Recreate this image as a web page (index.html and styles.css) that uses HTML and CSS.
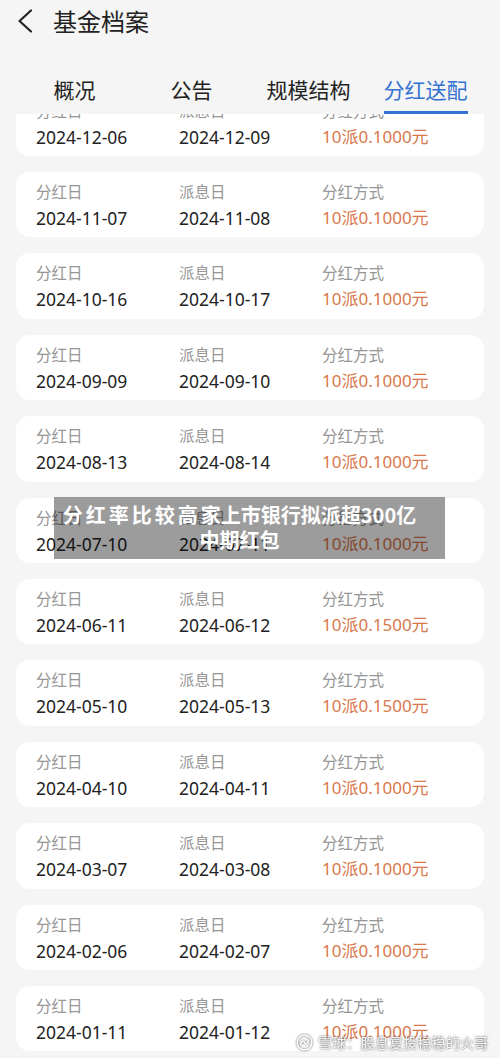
FILE: index.html
```html
<!DOCTYPE html>
<html lang="zh-CN">
<head>
<meta charset="utf-8">
<title>基金档案</title>
<link rel="stylesheet" href="styles.css">
</head>
<body>
<div class="page">
  <header class="header">
    <div class="titlebar">
      <svg class="back" width="20" height="26" viewBox="0 0 20 26"><path d="M15 2.5 L3.5 13 L15 23.5" fill="none" stroke="#222" stroke-width="2.2" stroke-linecap="round" stroke-linejoin="round"/></svg>
      <div class="title">基金档案</div>
    </div>
    <nav class="tabs">
      <div class="tab"><span class="tab-text">概况</span></div>
      <div class="tab"><span class="tab-text">公告</span></div>
      <div class="tab"><span class="tab-text">规模结构</span></div>
      <div class="tab active"><span class="tab-text">分红送配</span></div>
    </nav>
  </header>
  <main class="viewport">
    <div class="list">
      <div class="card"><div class="col"><div class="lbl">分红日</div><div class="val">2024-12-06</div></div><div class="col"><div class="lbl">派息日</div><div class="val">2024-12-09</div></div><div class="col"><div class="lbl">分红方式</div><div class="val orange">10派0.1000元</div></div></div>
      <div class="card"><div class="col"><div class="lbl">分红日</div><div class="val">2024-11-07</div></div><div class="col"><div class="lbl">派息日</div><div class="val">2024-11-08</div></div><div class="col"><div class="lbl">分红方式</div><div class="val orange">10派0.1000元</div></div></div>
      <div class="card"><div class="col"><div class="lbl">分红日</div><div class="val">2024-10-16</div></div><div class="col"><div class="lbl">派息日</div><div class="val">2024-10-17</div></div><div class="col"><div class="lbl">分红方式</div><div class="val orange">10派0.1000元</div></div></div>
      <div class="card"><div class="col"><div class="lbl">分红日</div><div class="val">2024-09-09</div></div><div class="col"><div class="lbl">派息日</div><div class="val">2024-09-10</div></div><div class="col"><div class="lbl">分红方式</div><div class="val orange">10派0.1000元</div></div></div>
      <div class="card"><div class="col"><div class="lbl">分红日</div><div class="val">2024-08-13</div></div><div class="col"><div class="lbl">派息日</div><div class="val">2024-08-14</div></div><div class="col"><div class="lbl">分红方式</div><div class="val orange">10派0.1000元</div></div></div>
      <div class="card"><div class="col"><div class="lbl">分红日</div><div class="val">2024-07-10</div></div><div class="col"><div class="lbl">派息日</div><div class="val">2024-07-11</div></div><div class="col"><div class="lbl">分红方式</div><div class="val orange">10派0.1000元</div></div></div>
      <div class="card"><div class="col"><div class="lbl">分红日</div><div class="val">2024-06-11</div></div><div class="col"><div class="lbl">派息日</div><div class="val">2024-06-12</div></div><div class="col"><div class="lbl">分红方式</div><div class="val orange">10派0.1500元</div></div></div>
      <div class="card"><div class="col"><div class="lbl">分红日</div><div class="val">2024-05-10</div></div><div class="col"><div class="lbl">派息日</div><div class="val">2024-05-13</div></div><div class="col"><div class="lbl">分红方式</div><div class="val orange">10派0.1500元</div></div></div>
      <div class="card"><div class="col"><div class="lbl">分红日</div><div class="val">2024-04-10</div></div><div class="col"><div class="lbl">派息日</div><div class="val">2024-04-11</div></div><div class="col"><div class="lbl">分红方式</div><div class="val orange">10派0.1000元</div></div></div>
      <div class="card"><div class="col"><div class="lbl">分红日</div><div class="val">2024-03-07</div></div><div class="col"><div class="lbl">派息日</div><div class="val">2024-03-08</div></div><div class="col"><div class="lbl">分红方式</div><div class="val orange">10派0.1000元</div></div></div>
      <div class="card"><div class="col"><div class="lbl">分红日</div><div class="val">2024-02-06</div></div><div class="col"><div class="lbl">派息日</div><div class="val">2024-02-07</div></div><div class="col"><div class="lbl">分红方式</div><div class="val orange">10派0.1000元</div></div></div>
      <div class="card"><div class="col"><div class="lbl">分红日</div><div class="val">2024-01-11</div></div><div class="col"><div class="lbl">派息日</div><div class="val">2024-01-12</div></div><div class="col"><div class="lbl">分红方式</div><div class="val orange">10派0.1000元</div></div></div>
    </div>
  </main>
  <div class="caption">
    <div class="cap-line"><span class="cap-pre">分红率比较高</span>家上市银行拟派超300亿</div>
    <div class="cap-line">中期红包</div>
  </div>
  <div class="watermark">
    <svg class="wm-logo" width="17" height="17" viewBox="0 0 17 17"><circle cx="8.5" cy="8.5" r="7.3" fill="none" stroke="#fff" stroke-width="1.4"/><path d="M4.5 10.5 C6 6.5 8 6.5 8.5 8.5 C9 10.5 11 10.5 12.5 6.5" fill="none" stroke="#fff" stroke-width="1.4" stroke-linecap="round"/></svg>
    <span class="wm-text">雪球：股息复投稳稳的火哥</span>
  </div>
</div>
</body>
</html>
```
FILE: styles.css
```css
* { box-sizing: border-box; }
html, body { margin: 0; padding: 0; }
body {
  background: #f5f5f5;
  font-family: "Noto Sans CJK SC", "Noto Sans", sans-serif;
  color: #222;
}
.page {
  position: relative;
  width: 500px;
  height: 1058px;
  overflow: hidden;
  display: flex;
  flex-direction: column;
}
.header {
  flex: 0 0 114px;
  background: #f5f5f5;
}
.titlebar {
  height: 42px;
  display: flex;
  align-items: center;
  padding-left: 16px;
}
.back { flex: 0 0 auto; }
.title {
  margin-left: 17px;
  font-size: 24px;
  line-height: 30px;
  color: #222;
}
.tabs {
  height: 72px;
  display: flex;
  padding: 0 16px;
}
.tab {
  flex: 1;
  display: flex;
  justify-content: center;
  padding-top: 33px;
}
.tab-text {
  font-size: 21px;
  line-height: 28px;
  height: 39px;
  color: #222;
  border-bottom: 3px solid transparent;
}
.tab.active .tab-text {
  color: #3473d1;
  border-bottom-color: #3473d1;
}
.viewport {
  flex: 1;
  overflow: hidden;
}
.list {
  margin-top: -23.3px;
  padding: 0 16px;
  display: flex;
  flex-direction: column;
  gap: 16px;
}
.card {
  height: 65.4px;
  background: #fff;
  border-radius: 14px;
  padding: 9px 0 0 20px;
  display: grid;
  grid-template-columns: 143px 143px 1fr;
}
.lbl {
  font-size: 15.5px;
  line-height: 20px;
  color: #969696;
}
.val {
  margin-top: 5px;
  font-family: "Noto Sans", "Noto Sans CJK SC", sans-serif;
  font-size: 17.5px;
  line-height: 24px;
  color: #222;
}
.val.orange { color: #d8784b; font-size: 17px; }
.caption {
  position: absolute;
  left: 54px;
  top: 497px;
  width: 391px;
  height: 62px;
  background: rgba(0, 0, 0, 0.39);
  padding: 5px 20px 0 0;
  text-align: center;
  color: #fff;
  font-weight: 700;
  font-size: 20px;
  line-height: 25px;
}
.cap-pre { letter-spacing: 3px; }
.watermark {
  position: absolute;
  left: 296px;
  top: 1032px;
  display: flex;
  align-items: center;
  gap: 5px;
  filter: drop-shadow(0 0 0.8px rgba(0,0,0,0.7));
}
.wm-text {
  font-size: 14.2px;
  line-height: 20px;
  color: #f2f2f2;
}
```
